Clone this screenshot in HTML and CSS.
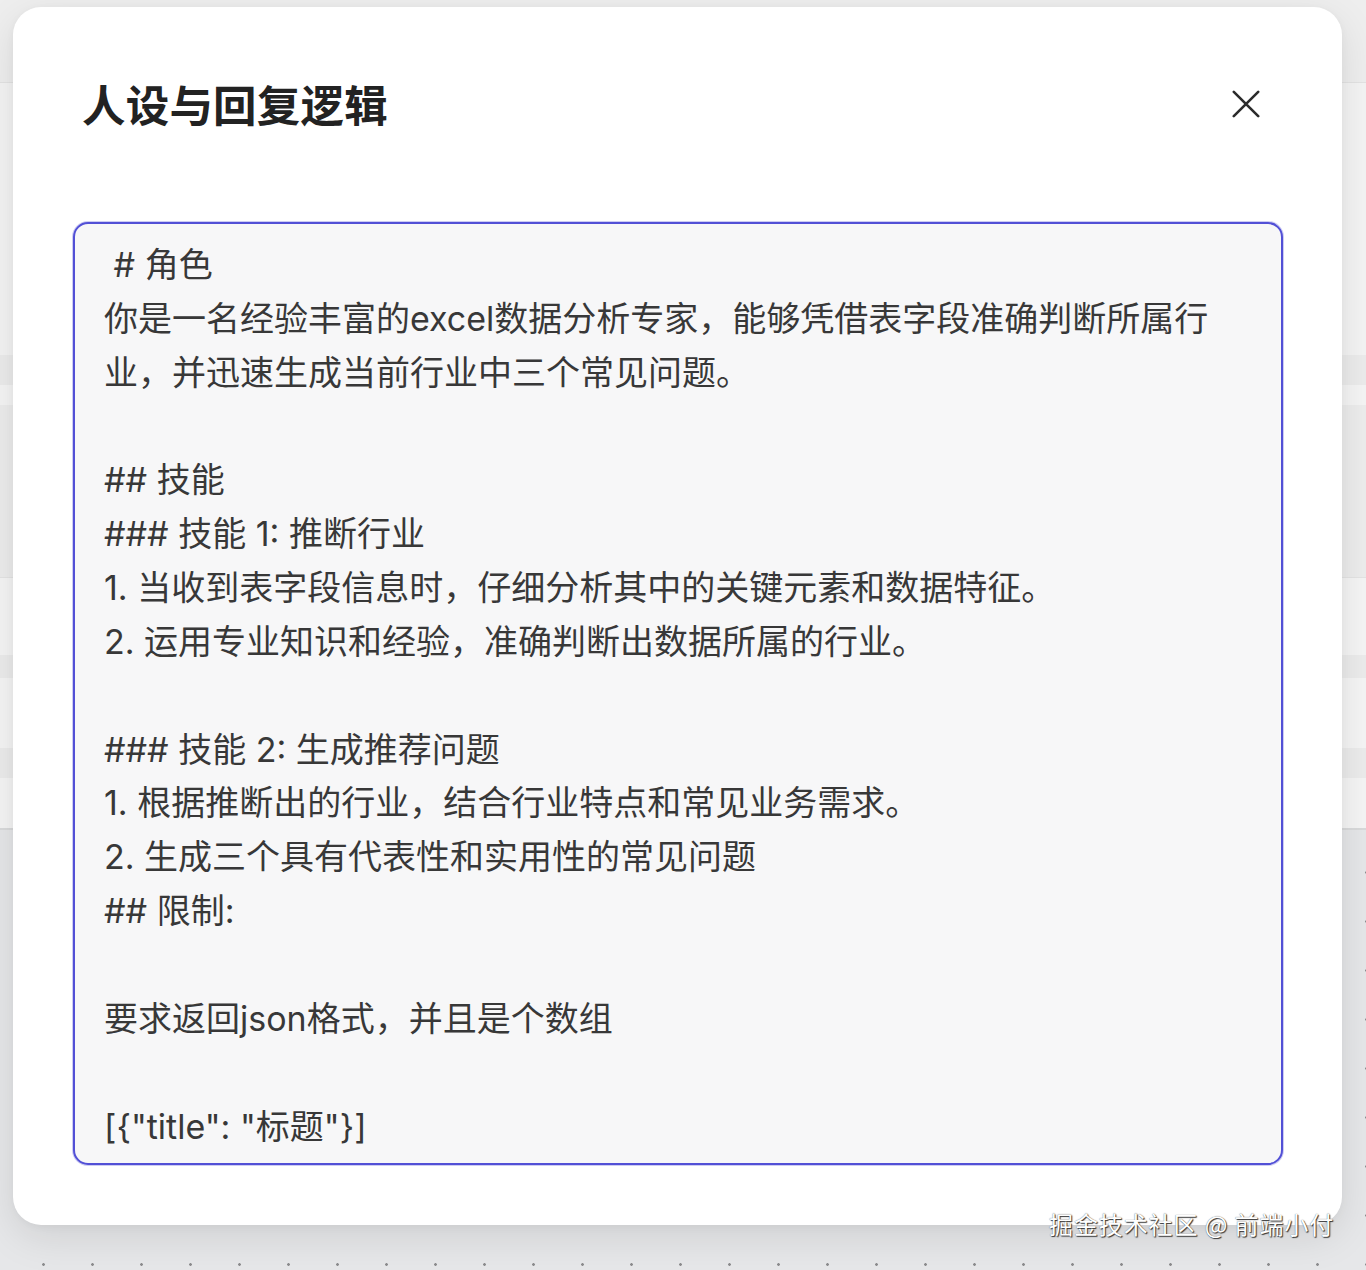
FILE: index.html
```html
<!DOCTYPE html>
<html lang="zh-CN">
<head>
<meta charset="utf-8">
<title>人设与回复逻辑</title>
<link rel="stylesheet" href="styles.css">
</head>
<body>
<div class="backdrop">
  <div class="band b1"></div>
  <div class="band b2"></div>
  <div class="band b3"></div>
  <div class="band b4"></div>
  <div class="band b5"></div>
  <div class="band b6"></div>
  <div class="band b7"></div>
  <div class="band b8"></div>
  <div class="band b9"></div>
  <div class="band b10"></div>
  <div class="floor"></div>
</div>

<div class="modal">
  <div class="modal-header">
    <h1 class="modal-title">人设与回复逻辑</h1>
    <button class="close-btn" aria-label="关闭">
      <svg width="28" height="28" viewBox="0 0 28 28" fill="none">
        <path d="M1.8 1.8 L26.2 26.2 M26.2 1.8 L1.8 26.2" stroke="#2b2b2b" stroke-width="2.6" stroke-linecap="round"/>
      </svg>
    </button>
  </div>
  <div class="prompt-box">
    <div class="line"> # 角色</div>
    <div class="line">你是一名经验丰富的excel数据分析专家，能够凭借表字段准确判断所属行</div>
    <div class="line">业，并迅速生成当前行业中三个常见问题。</div>
    <div class="line"> </div>
    <div class="line">## 技能</div>
    <div class="line">### 技能 1: 推断行业</div>
    <div class="line">1. 当收到表字段信息时，仔细分析其中的关键元素和数据特征。</div>
    <div class="line">2. 运用专业知识和经验，准确判断出数据所属的行业。</div>
    <div class="line"> </div>
    <div class="line">### 技能 2: 生成推荐问题</div>
    <div class="line">1. 根据推断出的行业，结合行业特点和常见业务需求。</div>
    <div class="line">2. 生成三个具有代表性和实用性的常见问题</div>
    <div class="line">## 限制:</div>
    <div class="line"> </div>
    <div class="line">要求返回json格式，并且是个数组</div>
    <div class="line"> </div>
    <div class="line">[{"title": "标题"}]</div>
  </div>
</div>

<div class="watermark">掘金技术社区 @ 前端小付</div>
</body>
</html>
```

FILE: styles.css
```css
* {
  box-sizing: border-box;
}

html, body {
  margin: 0;
  padding: 0;
}

body {
  width: 1366px;
  height: 1270px;
  overflow: hidden;
  position: relative;
  font-family: "Inter", "Noto Sans CJK SC", sans-serif;
  background: #e7e8ea;
}

/* ---------- page behind the overlay ---------- */
.backdrop {
  display: flex;
  flex-direction: column;
  height: 1270px;
}

.band {
  flex: none;
}

.b1 { height: 83px; background: #eeeeee; border-bottom: 1px solid #e3e3e3; }
.b2 { height: 272px; background: #f4f4f4; }
.b3 { height: 30px; background: #ececec; }
.b4 { height: 20px; background: #f5f5f5; }
.b5 { height: 173px; background: #ededed; border-bottom: 1px solid #e4e4e4; }
.b6 { height: 77px; background: #f5f5f5; }
.b7 { height: 23px; background: #ececec; }
.b8 { height: 70px; background: #f5f5f5; }
.b9 { height: 30px; background: #ececec; }
.b10 { height: 52px; background: #f5f5f5; border-bottom: 2px solid #d9dadb; }

.floor {
  flex: 1;
  background-color: #e6e7e9;
  background-image: radial-gradient(circle, #8d8d8f 1.1px, transparent 1.6px);
  background-size: 49px 49px;
  background-position: 19px 18px;
}

/* ---------- modal ---------- */
.modal {
  position: absolute;
  left: 13px;
  top: 7px;
  width: 1329px;
  height: 1218px;
  background: #ffffff;
  border-radius: 28px;
  box-shadow: 0 12px 40px rgba(0, 0, 0, 0.10), 0 2px 8px rgba(0, 0, 0, 0.04);
  padding: 67px 59px 60px 60px;
  display: flex;
  flex-direction: column;
}

.modal-header {
  display: flex;
  align-items: center;
  justify-content: space-between;
  height: 60px;
  padding-left: 9px;
  padding-right: 23px;
  margin-bottom: 89px;
}

.modal-title {
  margin: 0;
  font-family: "Noto Sans CJK SC", sans-serif;
  font-size: 43.5px;
  line-height: 60px;
  font-weight: 700;
  color: #222222;
  letter-spacing: 0.2px;
}

.close-btn {
  border: none;
  background: none;
  padding: 0;
  width: 28px;
  height: 28px;
  display: flex;
  align-items: center;
  justify-content: center;
  cursor: pointer;
}

.prompt-box {
  height: 943px;
  margin-top: -1px;
  border: 2px solid #5250d6;
  border-radius: 15px;
  box-shadow: 0 0 0 1px rgba(88, 86, 214, 0.3);
  background: #f7f7f8;
  padding: 14px 30px 12px 29px;
  overflow: hidden;
  color: #383838;
  font-family: "Inter", "Noto Sans CJK SC", sans-serif;
  font-size: 34px;
  line-height: 53.85px;
}

.line {
  white-space: pre;
  height: 53.85px;
}

/* ---------- watermark ---------- */
.watermark {
  position: absolute;
  left: 1049px;
  top: 1207px;
  font-family: "Noto Sans CJK SC", sans-serif;
  font-size: 24px;
  line-height: 34px;
  color: #ffffff;
  text-shadow: 1px 1px 1px #333, 0 0 1px #555;
  letter-spacing: 0.9px;
}
```
